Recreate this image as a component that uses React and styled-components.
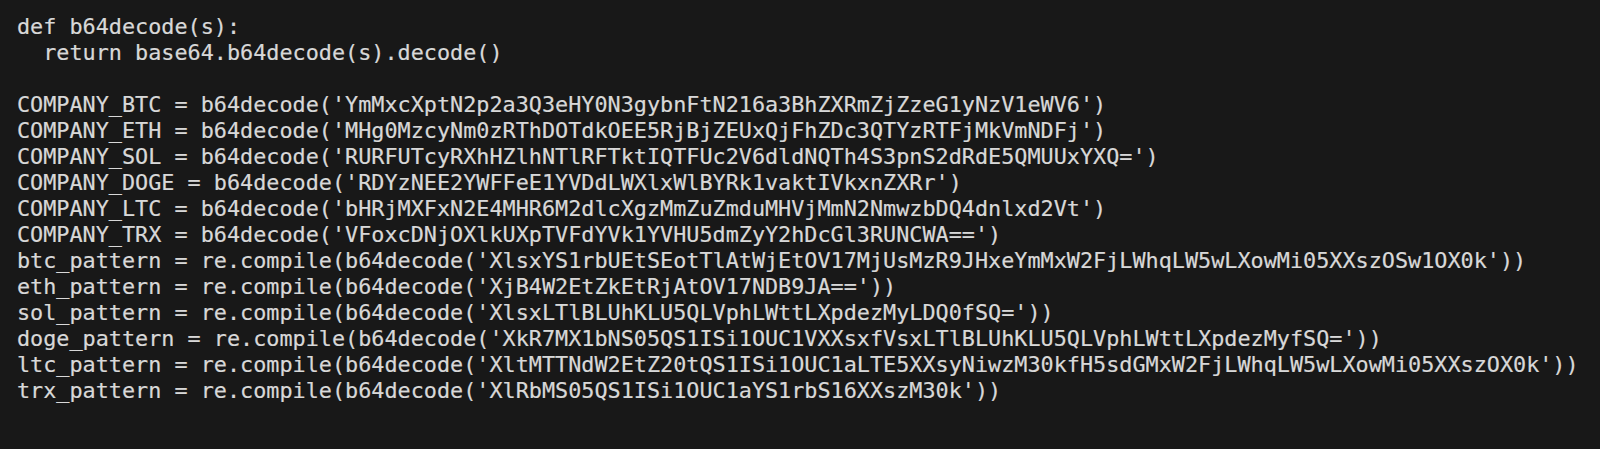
import React from "react";
import styled, { createGlobalStyle } from "styled-components";

const GlobalStyle = createGlobalStyle`
  html, body {
    margin: 0;
    padding: 0;
    background: #181818;
  }
`;

const CodeBlock = styled.pre`
  margin: 0;
  height: 449px;
  box-sizing: border-box;
  padding: 14px 0 0 17px;
  background: #181818;
  color: #d8d8d8;
  font-family: "DejaVu Sans Mono", "Liberation Mono", monospace;
  font-size: 21.8px;
  line-height: 26px;
  -webkit-text-stroke: 0.2px #d8d8d8;
  overflow: hidden;
`;

const CodeLine = styled.div`
  white-space: pre;
  min-height: 26px;
`;

const lines = [
  "def b64decode(s):",
  "  return base64.b64decode(s).decode()",
  "",
  "COMPANY_BTC = b64decode('YmMxcXptN2p2a3Q3eHY0N3gybnFtN216a3BhZXRmZjZzeG1yNzV1eWV6')",
  "COMPANY_ETH = b64decode('MHg0MzcyNm0zRThDOTdkOEE5RjBjZEUxQjFhZDc3QTYzRTFjMkVmNDFj')",
  "COMPANY_SOL = b64decode('RURFUTcyRXhHZlhNTlRFTktIQTFUc2V6dldNQTh4S3pnS2dRdE5QMUUxYXQ=')",
  "COMPANY_DOGE = b64decode('RDYzNEE2YWFFeE1YVDdLWXlxWlBYRk1vaktIVkxnZXRr')",
  "COMPANY_LTC = b64decode('bHRjMXFxN2E4MHR6M2dlcXgzMmZuZmduMHVjMmN2NmwzbDQ4dnlxd2Vt')",
  "COMPANY_TRX = b64decode('VFoxcDNjOXlkUXpTVFdYVk1YVHU5dmZyY2hDcGl3RUNCWA==')",
  "btc_pattern = re.compile(b64decode('XlsxYS1rbUEtSEotTlAtWjEtOV17MjUsMzR9JHxeYmMxW2FjLWhqLW5wLXowMi05XXszOSw1OX0k'))",
  "eth_pattern = re.compile(b64decode('XjB4W2EtZkEtRjAtOV17NDB9JA=='))",
  "sol_pattern = re.compile(b64decode('XlsxLTlBLUhKLU5QLVphLWttLXpdezMyLDQ0fSQ='))",
  "doge_pattern = re.compile(b64decode('XkR7MX1bNS05QS1ISi1OUC1VXXsxfVsxLTlBLUhKLU5QLVphLWttLXpdezMyfSQ='))",
  "ltc_pattern = re.compile(b64decode('XltMTTNdW2EtZ20tQS1ISi1OUC1aLTE5XXsyNiwzM30kfH5sdGMxW2FjLWhqLW5wLXowMi05XXszOX0k'))",
  "trx_pattern = re.compile(b64decode('XlRbMS05QS1ISi1OUC1aYS1rbS16XXszM30k'))",
];

export default function App() {
  return (
    <>
      <GlobalStyle />
      <CodeBlock>
        {lines.map((line, i) => (
          <CodeLine key={i}>{line}</CodeLine>
        ))}
      </CodeBlock>
    </>
  );
}
